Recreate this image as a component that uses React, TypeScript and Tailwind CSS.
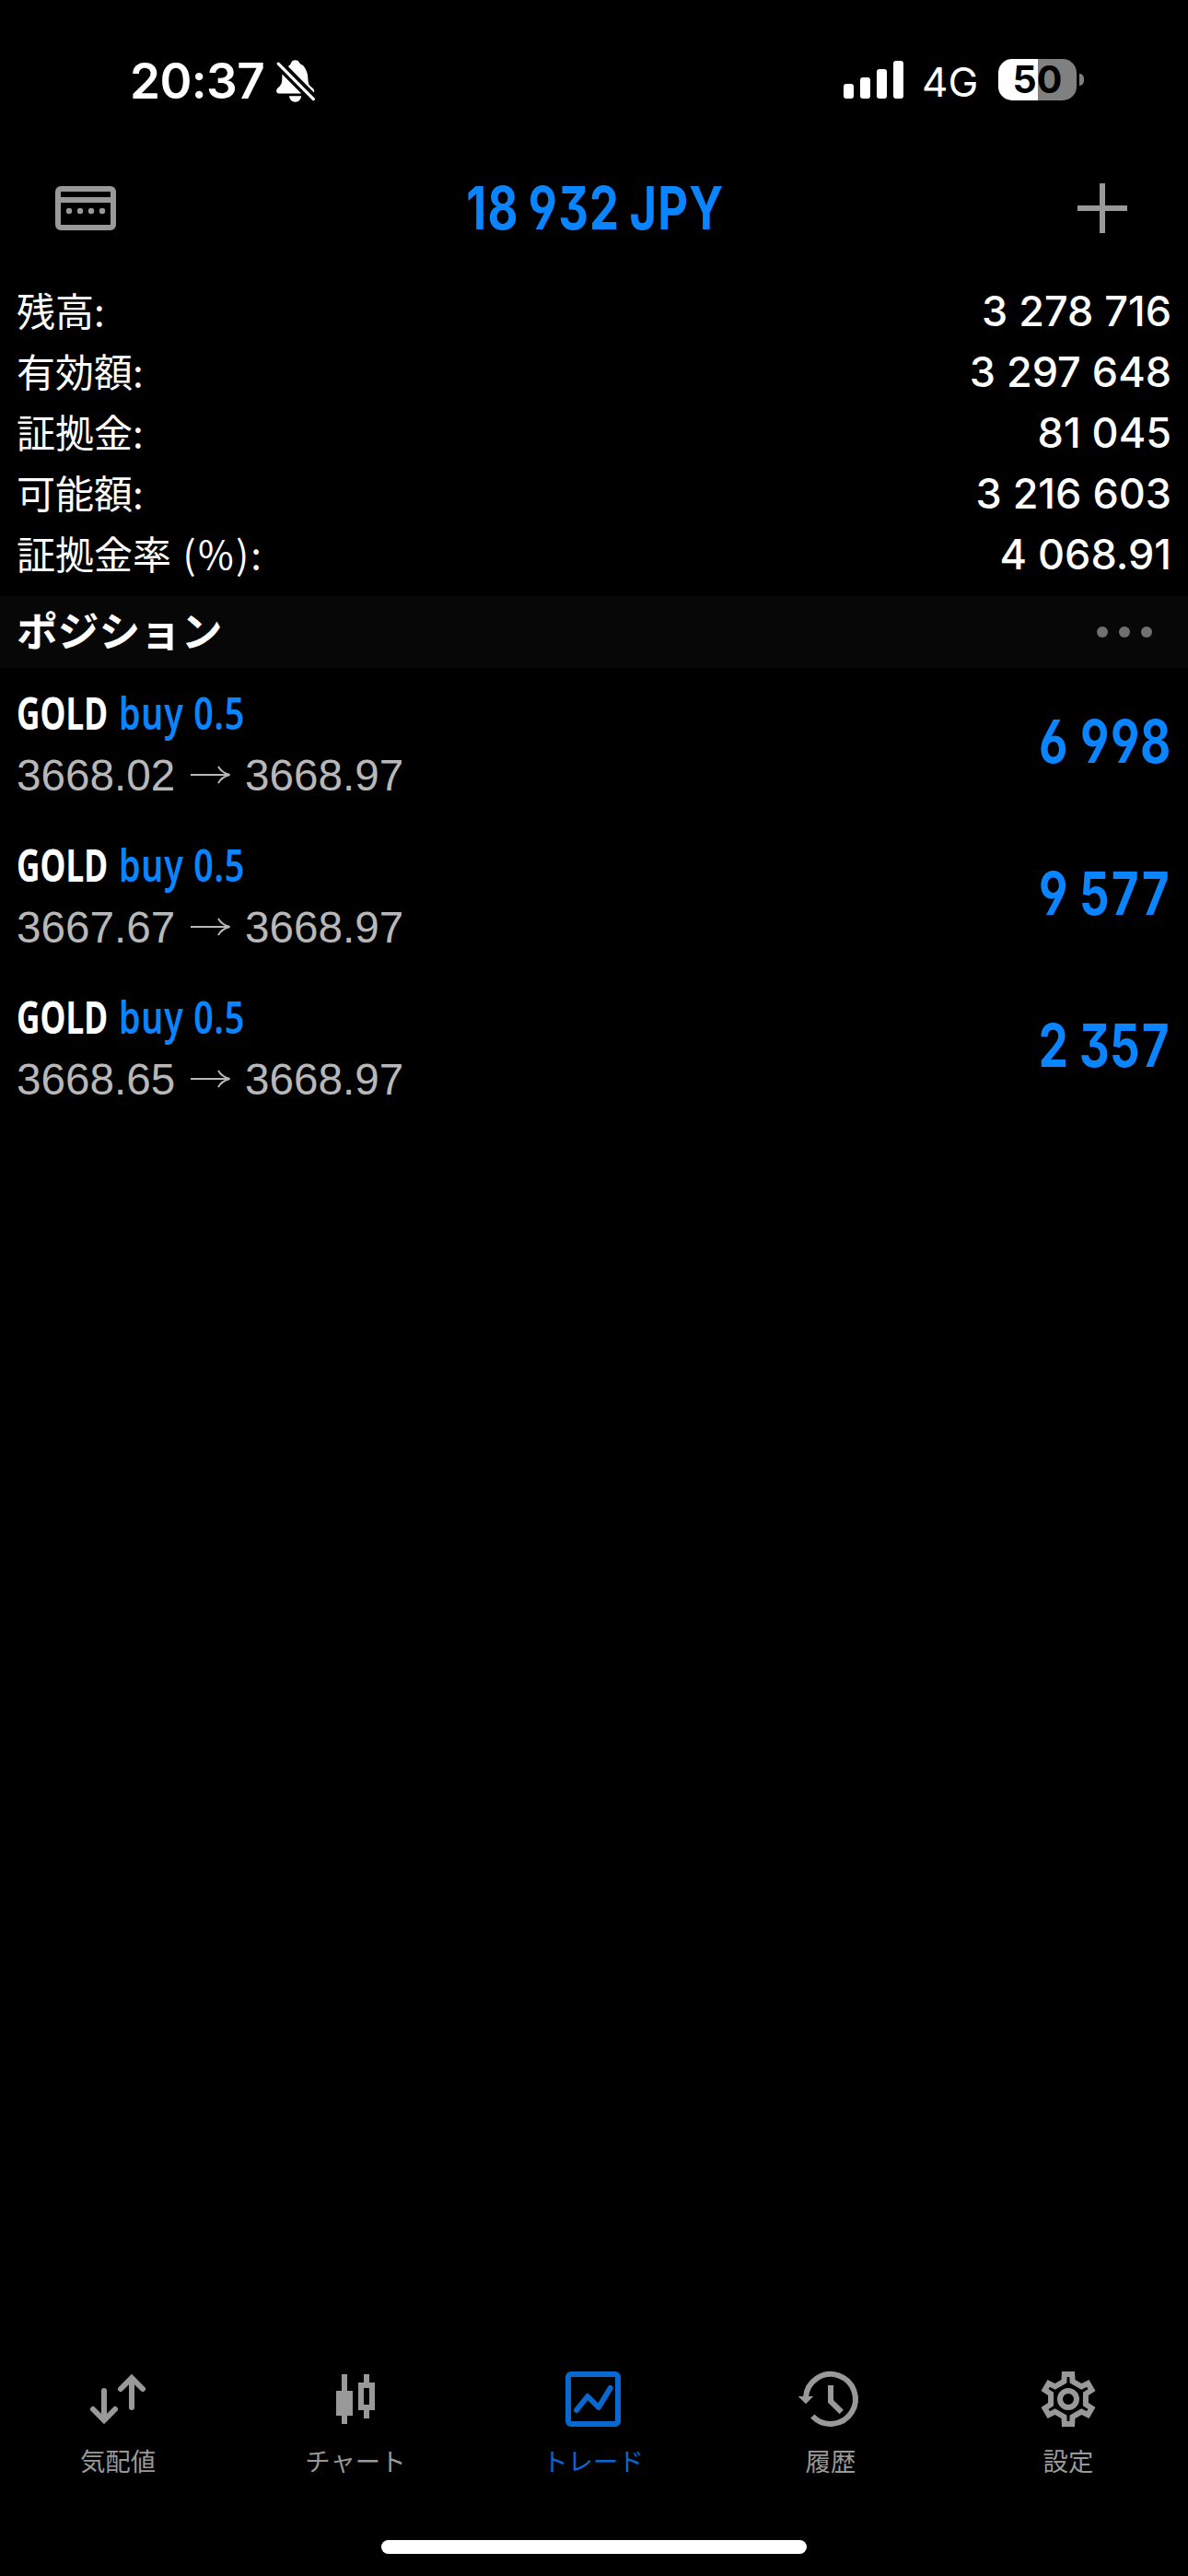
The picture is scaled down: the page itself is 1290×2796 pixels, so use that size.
import React from "react";

const summary = [
  { label: "残高:", value: "3 278 716" },
  { label: "有効額:", value: "3 297 648" },
  { label: "証拠金:", value: "81 045" },
  { label: "可能額:", value: "3 216 603" },
  { label: "証拠金率", unit: " (%):", value: "4 068.91" },
];

const positions = [
  { open: "3668.02", now: "3668.97", profit: "6 998" },
  { open: "3667.67", now: "3668.97", profit: "9 577" },
  { open: "3668.65", now: "3668.97", profit: "2 357" },
];

function BellOff() {
  return (
    <svg width="42" height="46" viewBox="0 0 42 46" fill="white">
      <path d="M13 7.2 C14.2 5.6 15.4 5.4 16 3.6 C16.8 1.4 18.4 0.3 20.6 0.3 C22.8 0.3 24.6 1.5 25.4 3.6 C26 5.3 28.6 4.6 31 8.5 C33.2 12 34.2 15.5 34.4 20 C34.6 25.2 35 26.6 37.6 29 C39.6 31 41.6 32 41.2 34.4 L40.7 35.2 Z" />
      <path d="M6.4 15.6 L27.2 36.5 H3 C-0.4 36.5 -0.6 32.6 1.6 30.6 C5.2 27.4 6.2 25.6 6.3 20.5 Z" />
      <path d="M2.2 4.2 L40.4 42.6" stroke="white" strokeWidth="3.2" strokeLinecap="round" />
      <path d="M14 39.3 H27.2 C26.6 43.2 24.2 45.7 20.6 45.7 C17 45.7 14.6 43.2 14 39.3 Z" />
    </svg>
  );
}

function CardIcon() {
  return (
    <svg width="66" height="48" viewBox="0 0 66 48" fill="none" stroke="#999999" strokeWidth="6">
      <rect x="3" y="3" width="60" height="42" rx="3" />
      <path d="M3 15 H63" />
      <g fill="#999999" stroke="none">
        <circle cx="15" cy="27" r="3.2" />
        <circle cx="27" cy="27" r="3.2" />
        <circle cx="39" cy="27" r="3.2" />
        <circle cx="51" cy="27" r="3.2" />
      </g>
    </svg>
  );
}

function QuotesIcon() {
  return (
    <g strokeLinecap="round">
      <path d="M30 36 V67 M18 56 L30 68 L42 56" />
      <path d="M60 54 V23 M48 34 L60 22 L72 34" />
    </g>
  );
}

function ChartIcon() {
  return (
    <g>
      <path d="M33 18 V72 M57 18 V30 M57 54 V66" />
      <rect x="24" y="36" width="18" height="27" fill="currentColor" stroke="none" />
      <rect x="51" y="30" width="12" height="24" />
    </g>
  );
}

function TradeIcon() {
  return (
    <g strokeLinecap="round" strokeLinejoin="round">
      <rect x="18" y="18" width="54" height="54" rx="3" />
      <path d="M27 57 L39 42 L51 54 L63.7 33" />
    </g>
  );
}

function HistoryIcon() {
  return (
    <g>
      <path d="M18 43 A27 27 0 1 1 25.3 63.5" />
      <path d="M9.7 42 H26.2 L18 50.2 Z" fill="currentColor" stroke="none" />
      <path d="M45 30 V47.4 L56.8 59" />
    </g>
  );
}

// Outline of a six-toothed gear around (45, 45).
const gearPoints = [0, 1, 2, 3, 4, 5]
  .flatMap((i) => {
    const a = (i * Math.PI) / 3;
    return [
      [-7.5, -21],
      [-7, -30],
      [7, -30],
      [7.5, -21],
    ].map(([x, y]) =>
      [45 + x * Math.cos(a) - y * Math.sin(a), 45 + x * Math.sin(a) + y * Math.cos(a)]
        .map((n) => n.toFixed(2))
        .join(",")
    );
  })
  .join(" ");

function GearIcon() {
  return (
    <g>
      <clipPath id="gear">
        <polygon points={gearPoints} />
      </clipPath>
      <polygon points={gearPoints} strokeWidth="12" clipPath="url(#gear)" />
      <circle cx="45" cy="45" r="9" />
    </g>
  );
}

const tabs = [
  { label: "気配値", icon: <QuotesIcon /> },
  { label: "チャート", icon: <ChartIcon /> },
  { label: "トレード", icon: <TradeIcon />, active: true },
  { label: "履歴", icon: <HistoryIcon /> },
  { label: "設定", icon: <GearIcon /> },
];

function StatusBar() {
  return (
    <header className="flex h-[172px] items-start justify-between pl-[141px] pr-[113px] font-['Inter',sans-serif] text-white">
      <div className="flex pt-[65px]">
        <span className="-mt-[7px] block h-[60px] w-[159px] whitespace-nowrap text-[53px] font-semibold leading-[60px] tracking-[-0.6px]">20:37</span>
        <BellOff />
      </div>
      <div className="flex pt-[64px]">
        <div className="mt-[2px] flex h-[41px] items-end gap-[7px]">
          <i className="h-[16px] w-[11px] rounded-[3px] bg-white" />
          <i className="h-[23px] w-[11px] rounded-[3px] bg-white" />
          <i className="h-[32px] w-[11px] rounded-[3px] bg-white" />
          <i className="h-[41px] w-[11px] rounded-[3px] bg-white" />
        </div>
        <span className="ml-[20px] block w-[83px] text-[44px] leading-[50px]">4G</span>
        <div className="flex h-[45px] w-[85px] items-center justify-center rounded-[15px] bg-[linear-gradient(90deg,#fff_50.6%,#808080_50.6%)] text-[41px] font-bold leading-[45px] text-black">
          50
        </div>
        <i className="ml-[3px] mt-[16px] h-[13px] w-[5px] rounded-r-full bg-[#808080]" />
      </div>
    </header>
  );
}

export default function App() {
  return (
    <div className="flex h-[2796px] w-[1290px] flex-col overflow-hidden bg-black font-['Inter','Noto_Sans_CJK_JP',sans-serif] text-white">
      <StatusBar />

      <nav className="flex h-[108px] items-center justify-between pl-[60px] pr-[66px]">
        <CardIcon />
        <h1 className="-ml-[4px] -mt-px flex w-[300px] justify-center whitespace-nowrap text-[64.5px] font-bold leading-[80px] text-[#0a84ff]">
          <span className="block scale-x-[0.785] tracking-[1.6px] [font-feature-settings:'ss01'] [word-spacing:-4px]">18 932 JPY</span>
        </h1>
        <svg width="54" height="54" viewBox="0 0 54 54" stroke="#999999" strokeWidth="6">
          <path d="M27 0 V54 M0 27 H54" />
        </svg>
      </nav>

      <section className="h-[367px] pl-[18px] pr-[18px] pt-[25px]">
        {summary.map((row) => (
          <div key={row.label} className="flex h-[66px] items-center justify-between">
            <span className="-mt-[4px] whitespace-pre font-['Noto_Sans_CJK_JP',sans-serif] text-[42px] leading-[66px]">
              {row.label}
              {row.unit && <span className="tracking-[2.2px] [word-spacing:1px]">{row.unit}</span>}
            </span>
            <span className="text-[45px] font-medium leading-[66px]">{row.value}</span>
          </div>
        ))}
      </section>

      <section className="flex h-[78px] items-center justify-between bg-[#070707] pl-[18px] pr-[39px]">
        <h2 className="-mt-[6px] font-['Noto_Sans_CJK_JP',sans-serif] text-[44.7px] font-bold leading-[78px]">ポジション</h2>
        <div className="flex gap-[12px]">
          <i className="size-[12px] rounded-full bg-[#707070]" />
          <i className="size-[12px] rounded-full bg-[#707070]" />
          <i className="size-[12px] rounded-full bg-[#707070]" />
        </div>
      </section>

      <main className="flex-1">
        {positions.map((p) => (
          <div key={p.open} className="flex h-[165px] items-center justify-between pl-[18px] pr-[19px]">
            <div>
              <div className="flex h-[68px] whitespace-nowrap font-['Noto_Sans',sans-serif] text-[48px] font-semibold leading-[67px]">
                <b className="block w-[111px] origin-left scale-x-[0.735] font-bold">GOLD</b>
                <span className="block origin-left scale-x-[0.785] tracking-[1px] text-[#0a84ff]">buy 0.5</span>
              </div>
              <div className="flex h-[68px] items-center whitespace-nowrap font-['Liberation_Sans',sans-serif] text-[47.7px] leading-[68px] text-[#b8b8b8]">
                <span className="w-[188px]">{p.open}</span>
                <svg className="mr-[14px]" width="46" height="24" viewBox="0 0 46 24" fill="none" stroke="currentColor" strokeWidth="2">
                  <path d="M1 11 H41" />
                  <path d="M31 2 C33.5 6.5 37.5 9.5 43.5 11 C37.5 12.5 33.5 15.5 31 20" />
                </svg>
                <span>{p.now}</span>
              </div>
            </div>
            <span className="-mt-[6px] block origin-right scale-x-[0.79] whitespace-nowrap text-[64.5px] font-bold leading-[80px] text-[#0a84ff] [font-feature-settings:'ss01','tnum'] [word-spacing:-2px]">
              {p.profit}
            </span>
          </div>
        ))}
      </main>

      <footer className="flex h-[237px]">
        {tabs.map((tab) => (
          <div
            key={tab.label}
            className={tab.active ? "flex w-[258px] flex-col items-center text-[#0768d0]" : "flex w-[258px] flex-col items-center text-[#999999]"}
          >
            <svg width="90" height="90" viewBox="1 0 90 90" fill="none" stroke="currentColor" strokeWidth="6">
              {tab.icon}
            </svg>
            <span className="mr-[2px] mt-px font-['Noto_Sans_CJK_JP',sans-serif] text-[27.4px] leading-[40px]">{tab.label}</span>
          </div>
        ))}
      </footer>
      <div className="-mt-[39px] mb-[24px] h-[15px] w-[462px] shrink-0 self-center rounded-full bg-white" />
    </div>
  );
}
